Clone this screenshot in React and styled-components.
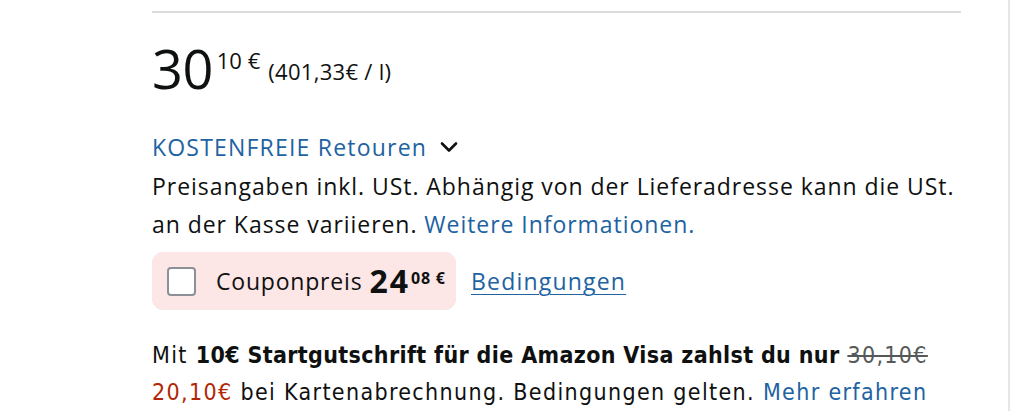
import React from "react";
import styled, { createGlobalStyle } from "styled-components";

const Global = createGlobalStyle`
  html, body { margin: 0; padding: 0; background: #fff; }
  body { font-family: "Open Sans", "Noto Sans", sans-serif; color: #0f1111; }
`;

const Page = styled.div`
  display: flex;
  height: 411px;
  overflow: hidden;
`;

const Column = styled.div`
  width: 1010px;
  padding-left: 152px;
  box-sizing: border-box;
  border-right: 2px solid #e6e6e6;
`;

const Content = styled.div`
  width: 809px;
  padding-top: 11px;
`;

const Divider = styled.hr`
  margin: 0;
  border: 0;
  border-top: 2px solid #dddddd;
`;

const PriceRow = styled.div`
  display: flex;
  align-items: flex-start;
  margin-top: 28px;
  height: 54px;
`;

const Whole = styled.span`
  font-size: 54px;
  line-height: 54px;
  letter-spacing: -0.5px;
`;

const Fraction = styled.span`
  font-size: ${({ size }) => size || 22}px;
  font-weight: ${({ bold }) => (bold ? 700 : 400)};
  line-height: 1;
  margin-left: ${({ left }) => left ?? 4}px;
  margin-top: ${({ top }) => top ?? 8}px;
`;

const UnitPrice = styled.span`
  font-size: 22px;
  line-height: 1;
  letter-spacing: 0.3px;
  margin-left: 8px;
  margin-top: 19px;
`;

const Returns = styled.div`
  display: flex;
  align-items: center;
  gap: 13px;
  margin-top: 38px;
  color: #2162a1;
  font-size: 23px;
  line-height: 28px;
  letter-spacing: 1.2px;
`;

const Paragraph = styled.p`
  margin: 6px 0 0;
  font-size: 23px;
  line-height: 38px;
  letter-spacing: 0.95px;
  white-space: nowrap;
`;

const Link = styled.a`
  color: #2162a1;
  text-decoration: ${({ underline }) => (underline ? "underline" : "none")};
  text-underline-offset: 4px;
  text-decoration-thickness: 1px;
`;

const CouponRow = styled.div`
  display: flex;
  align-items: center;
  gap: 15px;
  margin-top: 9px;
  font-size: 23px;
`;

const CouponBox = styled.div`
  display: flex;
  align-items: center;
  width: 304px;
  height: 58px;
  box-sizing: border-box;
  padding-left: 15px;
  background: #fce6e6;
  border-radius: 11px;
  letter-spacing: 0.8px;
`;

const Check = styled.span`
  width: 29px;
  height: 29px;
  box-sizing: border-box;
  border: 2px solid #8d9096;
  border-radius: 4px;
  background: #fff;
  margin-right: 20px;
`;

const CouponPrice = styled.span`
  display: inline-flex;
  align-items: flex-start;
  margin-left: 7px;
`;

const CouponWhole = styled.span`
  font-size: 32px;
  font-weight: 700;
  line-height: 32px;
  letter-spacing: 2px;
`;

const Terms = styled(Link)`
  letter-spacing: 1.2px;
`;

const Visa = styled.p`
  margin: 27px 0 0;
  font-family: "DejaVu Sans", sans-serif;
  font-stretch: condensed;
  font-size: 23px;
  line-height: 37px;
  letter-spacing: 1.35px;
  white-space: nowrap;
`;

const Strong = styled.b`
  letter-spacing: 0.35px;
`;

const Struck = styled.span`
  color: #565959;
  text-decoration: line-through;
`;

const Red = styled.span`
  color: #b12704;
`;

function Chevron() {
  return (
    <svg width="18" height="12" viewBox="0 0 18 12" fill="none">
      <path d="M2 2.5l7 7 7-7" stroke="#0f1111" strokeWidth="2.6" strokeLinecap="round" strokeLinejoin="round" />
    </svg>
  );
}

export default function App() {
  return (
    <Page>
      <Global />
      <Column>
        <Content>
          <Divider />
          <PriceRow>
            <Whole>30</Whole>
            <Fraction>10 €</Fraction>
            <UnitPrice>(401,33€ / l)</UnitPrice>
          </PriceRow>
          <Returns>
            <span>KOSTENFREIE Retouren</span>
            <Chevron />
          </Returns>
          <Paragraph>
            Preisangaben inkl. USt. Abhängig von der Lieferadresse kann die USt.
            <br />
            an der Kasse variieren. <Link>Weitere Informationen.</Link>
          </Paragraph>
          <CouponRow>
            <CouponBox>
              <Check />
              Couponpreis
              <CouponPrice>
                <CouponWhole>24</CouponWhole>
                <Fraction size={16} bold left={1} top={5}>08 €</Fraction>
              </CouponPrice>
            </CouponBox>
            <Terms underline>Bedingungen</Terms>
          </CouponRow>
          <Visa>
            Mit <Strong>10€ Startgutschrift für die Amazon Visa zahlst du nur</Strong>{" "}
            <Struck>30,10€</Struck>
            <br />
            <Red>20,10€</Red> bei Kartenabrechnung. Bedingungen gelten.{" "}
            <Link>Mehr erfahren</Link>
          </Visa>
        </Content>
      </Column>
    </Page>
  );
}
